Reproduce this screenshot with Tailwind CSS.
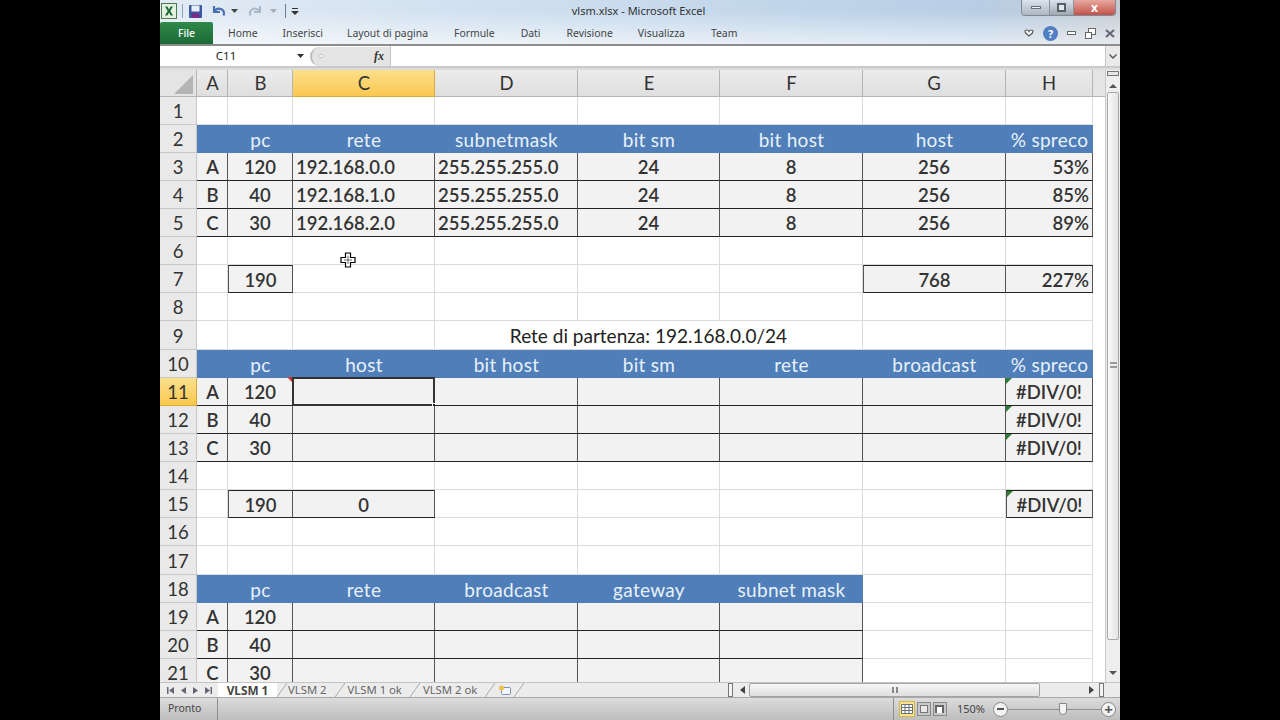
<!DOCTYPE html>
<html lang="it">
<head>
<meta charset="UTF-8">
<title>vlsm.xlsx - Microsoft Excel</title>
<script src="https://cdn.jsdelivr.net/npm/@tailwindcss/browser@4"></script>
</head>
<body class="bg-black overflow-hidden">
<div class="relative w-[960px] h-[720px] mx-auto bg-white flex flex-col overflow-hidden font-['Noto_Sans',sans-serif] text-[#3b3b3b]">

  <!-- title bar + ribbon tabs -->
  <div class="h-[46px] shrink-0 flex flex-col bg-[linear-gradient(180deg,rgba(255,255,255,0)_25%,rgba(255,255,255,0.6)_100%),linear-gradient(90deg,#e2ebf5,#c6d9ec_55%,#b8cee5_85%,#c4cbd2)] border-b-2 border-[#8c8c8c]">
    <div class="h-[22px] flex items-center">
      <div class="flex-1 basis-0 flex items-center gap-[5px] pl-[1px]">
        <svg width="16" height="16" viewBox="0 0 16 16"><rect x=".5" y=".5" width="15" height="15" fill="#e4f0df" stroke="#4b7a4b"/><path d="M4 3.500h2.400L8 6.400 9.600 3.500H12L9.300 8l2.700 4.500H9.600L8 9.600 6.400 12.500H4L6.700 8z" fill="#1d6b34"/></svg>
        <div class="w-px h-[14px] bg-[#8fa3b8]"></div>
        <svg width="15" height="15" viewBox="0 0 15 15"><rect x="1" y="1" width="13" height="13" rx="1" fill="#3e58a0"/><rect x="3.500" y="1.500" width="8" height="6" fill="#e8eef7"/><rect x="4" y="9.500" width="7" height="4.500" fill="#7c2a86"/></svg>
        <svg class="ml-[3px]" width="15" height="14" viewBox="0 0 15 14"><path d="M3 2v6h6M3.500 7.500C5 4 10 3.500 12.500 7c.8 1.200.7 3 0 4.500" fill="none" stroke="#4a6fb0" stroke-width="2.200"/></svg>
        <svg width="7" height="4" viewBox="0 0 7 4"><path d="M0 0h7L3.500 4z" fill="#444"/></svg>
        <svg class="ml-[5px]" width="15" height="14" viewBox="0 0 15 14"><path d="M12 2v6H6M11.500 7.500C10 4 5 3.500 2.500 7c-.8 1.200-.7 3 0 4.500" fill="none" stroke="#a9b8c8" stroke-width="2"/></svg>
        <svg class="ml-[2px]" width="7" height="4" viewBox="0 0 7 4"><path d="M0 0h7L3.500 4z" fill="#a4aeb8"/></svg>
        <div class="w-px h-[14px] bg-[#6d7f91] ml-[3px]"></div>
        <svg width="8" height="7" viewBox="0 0 8 7"><path d="M1 0h6v1H1zM0 3h8L4 7z" fill="#333"/></svg>
      </div>
      <div class="text-[11px] text-[#333] whitespace-nowrap">vlsm.xlsx  -  Microsoft Excel</div>
      <div class="flex-1 basis-0 flex justify-end pr-[4px] self-start">
        <div class="flex h-[16px] w-[95px] rounded-b-[4px] border border-t-0 border-[#7d8a96] overflow-hidden">
          <div class="w-[27px] flex items-center justify-center bg-gradient-to-b from-[#dbe4ee] to-[#aeb7c0]"><div class="w-[10px] h-[3px] bg-[#eef2f6] border border-[#66707a]"></div></div>
          <div class="w-[25px] flex items-center justify-center border-x border-[#8a949e] bg-gradient-to-b from-[#dbe4ee] to-[#9fa8b0]"><div class="w-[9px] h-[9px] border-2 border-[#56606a] bg-[#e4e8ec]"></div></div>
          <div class="flex-1 flex items-center justify-center bg-gradient-to-b from-[#e7a79f] to-[#c0524a] text-white text-[12px] font-bold leading-none">x</div>
        </div>
      </div>
    </div>
    <div class="h-[22px] flex items-center text-[10.400px] text-[#444]">
      <div class="w-[53px] h-[22px] shrink-0 rounded-t-[2px] bg-gradient-to-b from-[#2f8a4b] to-[#1c6a36] text-white text-center leading-[22px] font-medium">File</div>
      <div class="flex items-center pt-[2px]">
        <span class="ml-[15px]">Home</span>
        <span class="ml-[25px]">Inserisci</span>
        <span class="ml-[24px]">Layout di pagina</span>
        <span class="ml-[26px]">Formule</span>
        <span class="ml-[26px]">Dati</span>
        <span class="ml-[26px]">Revisione</span>
        <span class="ml-[25px]">Visualizza</span>
        <span class="ml-[26px]">Team</span>
      </div>
      <div class="ml-auto flex items-center gap-[9px] pr-[5px]">
        <svg width="10" height="8" viewBox="0 0 10 8"><path d="M1 2.500C1 .5 4 .5 5 2.500 6 .5 9 .5 9 2.500 9 4.500 6 6 5 7 4 6 1 4.500 1 2.500z" fill="#fff" stroke="#555" stroke-width="1.200"/></svg>
        <div class="w-[15px] h-[15px] rounded-full bg-[#4f7fc0] text-white text-[11px] font-bold text-center leading-[15px]">?</div>
        <div class="w-[9px] h-[4px] border border-[#666] bg-white"></div>
        <svg width="11" height="11" viewBox="0 0 11 11"><rect x="3.500" y=".5" width="7" height="6" fill="#fff" stroke="#666"/><rect x=".5" y="4.500" width="6" height="6" fill="#fff" stroke="#666"/></svg>
        <svg width="10" height="9" viewBox="0 0 10 9"><path d="M1 1l8 7M9 1L1 8" stroke="#667" stroke-width="2.200"/></svg>
      </div>
    </div>
  </div>

  <!-- formula bar -->
  <div class="h-[22px] shrink-0 flex items-center bg-white border-b-[2px] border-[#c9c9c9]">
    <div class="w-[145px] text-[11.500px] text-[#222] relative text-center pr-[13px]">C11
      <svg class="absolute right-[1px] top-[7px]" width="7" height="4" viewBox="0 0 7 4"><path d="M0 0h7L3.500 4z" fill="#333"/></svg>
    </div>
    <div class="ml-[5px] w-[80px] h-[19px] flex items-center justify-between pl-[6px] pr-[6px] rounded-l-full bg-[#e4e4e4] border-l-2 border-[#bbb] font-['Liberation_Serif',serif] italic font-bold text-[12px] text-[#333]">
      <div class="w-[6px] h-[4px] rounded-full bg-[#f4f4f4] border border-[#c8c8c8]"></div>fx
    </div>
    <div class="flex-1 h-full border-l border-[#c4c4c4]"></div>
    <div class="w-[15px] h-full flex items-center justify-center bg-[#eaeaea] border-l border-[#c4c4c4]">
      <svg width="8" height="5" viewBox="0 0 8 5"><path d="M1 0l3 3 3-3 1 1-4 4-4-4z" fill="#555"/></svg>
    </div>
  </div>

  <!-- sheet + vertical scrollbar -->
  <div class="flex-1 min-h-0 flex pt-[2px] bg-[#dcdcdc]">
    <div id="sheet" class="w-[945px] overflow-hidden grid content-start leading-none grid-cols-[37px_31px_65px_142px_143px_142px_143px_143px_87px_12px] grid-rows-[27px_repeat(8,28px)_29px_repeat(7,28px)_29px_repeat(4,28px)] font-['Lato',sans-serif] text-[18.500px] font-semibold text-[#333]"></div>
    <div class="w-[15px] flex flex-col items-center bg-[#eeeeee] border-l border-[#c8c8c8]">
      <div class="w-[12px] h-[5px] mt-[1px] border border-[#777] bg-[#e6e6e6]"></div>
      <svg class="mt-[8px]" width="8" height="4" viewBox="0 0 8 4"><path d="M4 0l4 4H0z" fill="#555"/></svg>
      <div class="mt-[4px] w-[12px] h-[548px] rounded-[2px] border border-[#a8a8a8] bg-gradient-to-r from-[#f8f8f8] to-[#e4e4e4] flex items-center justify-center">
        <div class="w-[7px] h-[6px] border-y-2 border-[#999] mt-[-3px]"></div>
      </div>
      <svg class="mt-[31px]" width="8" height="4" viewBox="0 0 8 4"><path d="M0 0h8L4 4z" fill="#555"/></svg>
    </div>
  </div>

  <!-- sheet tabs -->
  <div class="h-[16px] shrink-0 flex items-center bg-[#ececec] border-t border-[#c4c4c4] border-b border-b-[#a8a8a8] text-[11.300px] text-[#666]">
    <div class="w-[58px] flex items-center justify-around pl-[4px] pr-[3px]">
      <svg width="7" height="7" viewBox="0 0 7 7"><path d="M0 0h1.500v7H0zM7 0v7L2 3.500z" fill="#667"/></svg>
      <svg width="5" height="7" viewBox="0 0 5 7"><path d="M5 0v7L0 3.500z" fill="#667"/></svg>
      <svg width="5" height="7" viewBox="0 0 5 7"><path d="M0 0v7l5-3.500z" fill="#667"/></svg>
      <svg width="7" height="7" viewBox="0 0 7 7"><path d="M5.500 0H7v7H5.500zM0 0v7l5-3.500z" fill="#667"/></svg>
    </div>
    <div class="w-[59px] h-[14px] bg-white font-bold text-[11.800px] text-[#444] text-center leading-[14px]">VLSM 1</div>
    <svg width="10" height="14" viewBox="0 0 10 14"><path d="M0 14L10 0" stroke="#aaa"/></svg>
    <span class="ml-[1px]">VLSM 2</span>
    <svg class="ml-[8px]" width="10" height="14" viewBox="0 0 10 14"><path d="M0 14L10 0" stroke="#aaa"/></svg>
    <span class="ml-[3px]">VLSM 1 ok</span>
    <svg class="ml-[8px]" width="10" height="14" viewBox="0 0 10 14"><path d="M0 14L10 0" stroke="#aaa"/></svg>
    <span class="ml-[3px]">VLSM 2 ok</span>
    <svg class="ml-[8px]" width="10" height="14" viewBox="0 0 10 14"><path d="M0 14L10 0" stroke="#aaa"/></svg>
    <svg class="ml-[3px]" width="14" height="11" viewBox="0 0 14 11"><rect x="3.500" y="2.500" width="9" height="7" rx="1" fill="#f4f6fb" stroke="#7d8fb5"/><circle cx="3.500" cy="3" r="2.500" fill="#eec34c"/></svg>
    <svg class="ml-[2px]" width="10" height="14" viewBox="0 0 10 14"><path d="M0 14L10 0" stroke="#aaa"/></svg>
    <div class="ml-auto flex items-center pr-[16px]">
      <div class="w-[5px] h-[14px] border border-[#777] bg-[#f4f4f4]"></div>
      <svg class="ml-[7px]" width="5" height="8" viewBox="0 0 5 8"><path d="M5 0v8L0 4z" fill="#444"/></svg>
      <div class="ml-[4px] w-[291px] h-[14px] rounded-[2px] border border-[#a4a4a4] bg-gradient-to-b from-[#f7f7f7] to-[#dfdfdf] flex items-center justify-center">
        <div class="w-[6px] h-[6px] border-x-2 border-[#888] mx-auto"></div>
      </div>
      <svg class="ml-[49px]" width="5" height="8" viewBox="0 0 5 8"><path d="M0 0v8l5-4z" fill="#444"/></svg>
      <div class="ml-[5px] w-[5px] h-[14px] border border-[#777] bg-[#f4f4f4]"></div>
    </div>
  </div>

  <!-- status bar -->
  <div class="h-[22px] shrink-0 flex items-center bg-gradient-to-b from-[#dcdcdc] to-[#bdbdbd] text-[10.500px] text-[#444]">
    <div class="w-[58px] h-full pl-[8px] flex items-center border-r border-[#8f8f8f]">Pronto</div>
    <div class="ml-auto w-px h-full bg-[#8f8f8f]"></div>
    <div class="ml-[5px] w-[16px] h-[16px] border border-[#d6b94a] bg-[#f9e48a] flex items-center justify-center">
      <svg width="12" height="10" viewBox="0 0 12 10"><path d="M.5.5h11v9H.5zM.5 3.500h11M.5 6.500h11M4 .5v9M8 .5v9" fill="#fff" stroke="#66707c"/></svg>
    </div>
    <div class="ml-[2px] w-[14px] h-[14px] border border-[#8a8a8a] bg-[#c8c8c8] flex items-center justify-center"><div class="w-[8px] h-[8px] border border-[#777] bg-[#e8e8e8]"></div></div>
    <div class="ml-[2px] w-[14px] h-[14px] border border-[#8a8a8a] bg-[#c8c8c8] flex items-center justify-center"><div class="w-[9px] h-[8px] border-r-2 border-l-2 border-t-2 border-[#666] bg-white"></div></div>
    <span class="ml-[10px] text-[11px]">150%</span>
    <div class="ml-[8px] w-[15px] h-[15px] rounded-full border border-[#888] bg-[#f2f2f2] flex items-center justify-center"><div class="w-[7px] h-[2px] bg-[#555]"></div></div>
    <div class="relative w-[93px] h-px bg-[#8f8f8f] flex items-center">
      <div class="absolute left-[51px] top-[-6px] w-[8px] h-[12px] rounded-b-[4px] border border-[#888] bg-[#f4f4f4]"></div>
    </div>
    <div class="w-[15px] h-[15px] mr-[4px] rounded-full border border-[#888] bg-[#f2f2f2] flex items-center justify-center text-[15px] font-bold leading-none text-[#555]">+</div>
  </div>

  <!-- mouse pointer over C6 -->
  <svg class="absolute left-[180px] top-[252px]" width="16" height="16" viewBox="0 0 16 16"><path d="M5.500 1h5v4.500H15v5h-4.500V15h-5v-4.500H1v-5h4.500z" fill="#fff" stroke="#000" stroke-width="1.200"/><path d="M8 4v8M4 8h8" stroke="#666"/></svg>
</div>

<script>
const h = 'bg-[#4f7eb8] text-[#e8f1fa] text-[19px] font-normal tracking-[0.3px]'
const plain = 'bg-white border-r border-b border-[#dcdcdc]'
const boxBase = 'bg-[#f2f2f2] border-r border-b border-r-[#555] border-b-[#222] pt-[2px]'

const rows = {
  2: ['','pc','rete','subnetmask','bit sm','bit host','host','% spreco'],
  10: ['','pc','host','bit host','bit sm','rete','broadcast','% spreco'],
  18: ['','pc','rete','broadcast','gateway','subnet mask'],
}
const data = {
  3: ['A','120','192.168.0.0','255.255.255.0','24','8','256','53%'],
  4: ['B','40','192.168.1.0','255.255.255.0','24','8','256','85%'],
  5: ['C','30','192.168.2.0','255.255.255.0','24','8','256','89%'],
  11: ['A','120','','','','','','#DIV/0!'],
  12: ['B','40','','','','','','#DIV/0!'],
  13: ['C','30','','','','','','#DIV/0!'],
  19: ['A','120','','','',''],
  20: ['B','40','','','',''],
  21: ['C','30','','','',''],
}
// loose total cells; a neighbouring total already draws the line between them
const totals = {
  '7,1': ['190', true], '7,6': ['768', true], '7,7': ['227%', false],
  '15,1': ['190', true], '15,2': ['0', false], '15,7': ['#DIV/0!', true],
}
const cols = ['A','B','C','D','E','F','G','H']

// text alignment of a data cell, by column
function align(c, v) {
  if (c == 0) return 'justify-center pl-[1px]'
  if ((c == 2 || c == 3) && v.includes('.')) return 'justify-start pl-[3px]'
  if (c == 7 && v.endsWith('%')) return 'justify-end pr-[3px]'
  return 'justify-center'
}

const green = '<svg class="absolute left-0 top-0" width="6" height="6" viewBox="0 0 6 6"><path d="M0 0h6L0 6z" fill="#2e7d32"/></svg>'
const red = '<svg class="absolute right-0 top-[-1px]" width="5" height="5" viewBox="0 0 5 5"><path d="M0 0h5v5z" fill="#d0342c"/></svg>'
const selection = '<div class="absolute left-[-1px] top-[-1px] right-[-1px] bottom-[-1px] border-2 border-[#333]"></div><div class="absolute right-[-4px] bottom-[-4px] w-[6px] h-[6px] bg-[#222] border border-white"></div>'

let html = ''
// column headers
html += '<div class="bg-[#e4e4e4] border-r border-b border-[#b5b5b5] relative"><svg class="absolute right-[3px] bottom-[2px]" width="19" height="19" viewBox="0 0 19 19"><path d="M19 0v19H0z" fill="#b4b4b4"/></svg></div>'
cols.forEach((c, i) => {
  html += `<div class="flex items-center justify-center font-normal border-r border-b pt-[1px] ${i < 6 ? 'pl-[1px]' : ''} ${i == 2 ? 'bg-gradient-to-b from-[#fbe08a] to-[#fac84e] border-[#d9a93a]' : 'bg-gradient-to-b from-[#ececec] to-[#dfdfdf] border-[#b5b5b5]'}">${c}</div>`
})
html += '<div class="bg-[#e4e4e4] border-b border-[#b5b5b5]"></div>'

for (let r = 1; r <= 21; r++) {
  const head = r == 11
    ? 'bg-gradient-to-b from-[#fbe08a] to-[#fac84e] border-[#d9a93a]'
    : 'bg-[#e9e9e9] border-[#c8c8c8]'
  html += `<div class="${head} border-r border-b pt-[2px] flex items-center justify-center font-normal">${r}</div>`
  if (r == 9) {
    html += `<div class="${plain}"></div><div class="${plain}"></div><div class="${plain}"></div>`
    html += `<div class="col-span-3 bg-white border-b border-r border-[#dcdcdc] pt-[1px] flex items-center justify-center font-normal text-[19px] text-[#222] whitespace-nowrap">Rete di partenza: 192.168.0.0/24</div>`
    html += `<div class="${plain}"></div><div class="${plain}"></div><div class="bg-white"></div>`
    continue
  }
  for (let c = 0; c < 8; c++) {
    const key = r + ',' + c
    if (rows[r] && rows[r][c] !== undefined) {
      html += `<div class="${h} flex items-center justify-center">${rows[r][c]}</div>`
    } else if (data[r] && data[r][c] !== undefined) {
      const v = data[r][c]
      let extra = ''
      if (r == 11 && c == 2) extra = selection
      if (r == 11 && c == 1) extra = red
      if (v.startsWith('#')) extra = green
      html += `<div class="${boxBase} ${align(c, v)} flex items-center relative">${v}${extra}</div>`
    } else if (totals[key]) {
      const [v, left] = totals[key]
      html += `<div class="${boxBase} border-t border-t-[#222] ${left ? 'border-l border-l-[#555]' : ''} ${align(c, v)} flex items-center relative">${v}${v.startsWith('#') ? green : ''}</div>`
    } else {
      html += `<div class="${plain}"></div>`
    }
  }
  html += '<div class="bg-white"></div>'
}
document.getElementById('sheet').innerHTML = html
</script>
</body>
</html>
